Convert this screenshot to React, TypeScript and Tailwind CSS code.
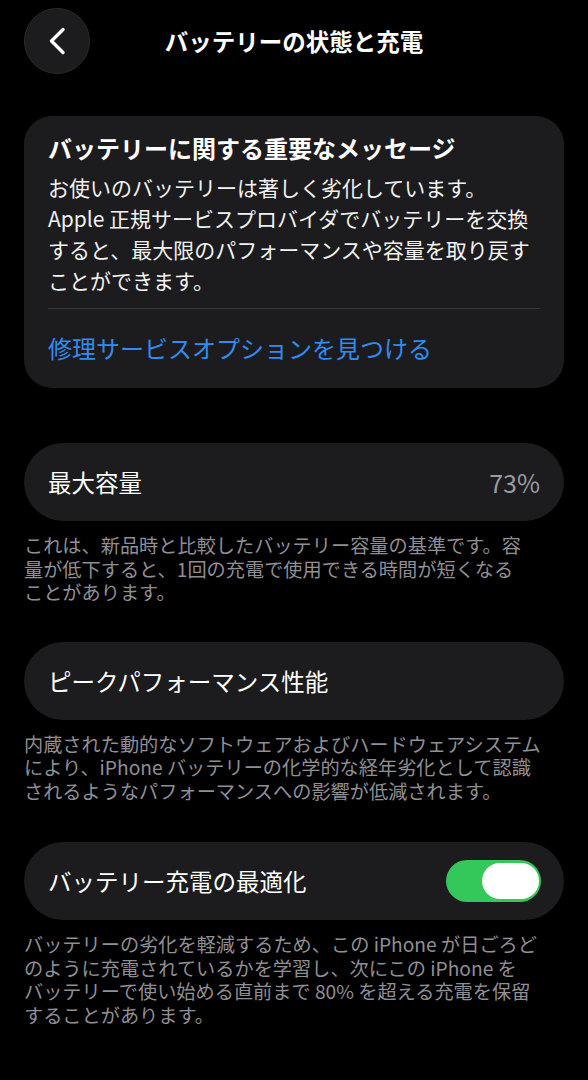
import React from "react";

const font = { fontFamily: '"Noto Sans CJK JP", "Noto Sans", sans-serif' };

function Caption({ lines }: { lines: string[] }) {
  return (
    <div className="mt-[13px] px-6 text-[19.2px] leading-[23.5px] text-[#8f8f95]">
      {lines.map((l, i) => (
        <div key={i} className="whitespace-nowrap">
          {l}
        </div>
      ))}
    </div>
  );
}

export default function App() {
  return (
    <div
      className="min-h-[1080px] w-[588px] bg-black text-white antialiased"
      style={font}
    >
      {/* Header */}
      <div className="flex items-center px-6 pt-2">
        <button className="flex h-[66px] w-[66px] shrink-0 items-center justify-center rounded-full border border-[#2a2a2c] bg-[#1c1c1e]">
          <svg width="18" height="28" viewBox="0 0 18 28" fill="none">
            <path
              d="M15 2.5 L3.5 14 L15 25.5"
              stroke="white"
              strokeWidth="3.4"
              strokeLinecap="round"
              strokeLinejoin="round"
            />
          </svg>
        </button>
        <div className="flex-1 text-center text-[23.5px] font-semibold leading-[32px]">
          バッテリーの状態と充電
        </div>
        <div className="h-[66px] w-[66px] shrink-0" />
      </div>

      {/* Important message card */}
      <div className="mx-6 mt-[42px] rounded-[28px] bg-[#1c1c1e] px-6 pb-6 pt-4">
        <div className="whitespace-nowrap text-[24px] font-bold leading-[32px]">
          バッテリーに関する重要なメッセージ
        </div>
        <div className="mt-2 text-[21px] leading-[31px] text-[#f2f2f2]">
          <div className="whitespace-nowrap">お使いのバッテリーは著しく劣化しています。</div>
          <div className="whitespace-nowrap">Apple 正規サービスプロバイダでバッテリーを交換</div>
          <div className="whitespace-nowrap">すると、最大限のパフォーマンスや容量を取り戻す</div>
          <div className="whitespace-nowrap">ことができます。</div>
        </div>
        <div className="mt-3 h-px bg-[#38383a]" />
        <div className="mt-[23px] whitespace-nowrap text-[24px] leading-[32px] text-[#2f8cf2]">
          修理サービスオプションを見つける
        </div>
      </div>

      {/* Max capacity */}
      <div className="mx-6 mt-[55px] flex h-[78px] items-center justify-between rounded-full bg-[#1c1c1e] px-6">
        <span className="text-[23.5px] leading-[32px]">最大容量</span>
        <span className="text-[25px] leading-[32px] text-[#9a9aa0]">73%</span>
      </div>
      <Caption
        lines={[
          "これは、新品時と比較したバッテリー容量の基準です。容",
          "量が低下すると、1回の充電で使用できる時間が短くなる",
          "ことがあります。",
        ]}
      />

      {/* Peak performance */}
      <div className="mx-6 mt-[37px] flex h-[78px] items-center rounded-full bg-[#1c1c1e] px-6">
        <span className="text-[23.5px] leading-[32px]">ピークパフォーマンス性能</span>
      </div>
      <Caption
        lines={[
          "内蔵された動的なソフトウェアおよびハードウェアシステム",
          "により、iPhone バッテリーの化学的な経年劣化として認識",
          "されるようなパフォーマンスへの影響が低減されます。",
        ]}
      />

      {/* Optimized charging */}
      <div className="mx-6 mt-[39px] flex h-[78px] items-center justify-between rounded-full bg-[#1c1c1e] pl-6 pr-[23px]">
        <span className="text-[23.5px] leading-[32px]">バッテリー充電の最適化</span>
        <div className="flex h-[42px] w-[95px] items-center justify-end rounded-full bg-[#34c759] pr-[2px]">
          <div className="h-[36px] w-[57px] rounded-full bg-white" />
        </div>
      </div>
      <Caption
        lines={[
          "バッテリーの劣化を軽減するため、この iPhone が日ごろど",
          "のように充電されているかを学習し、次にこの iPhone を",
          "バッテリーで使い始める直前まで 80% を超える充電を保留",
          "することがあります。",
        ]}
      />
    </div>
  );
}
